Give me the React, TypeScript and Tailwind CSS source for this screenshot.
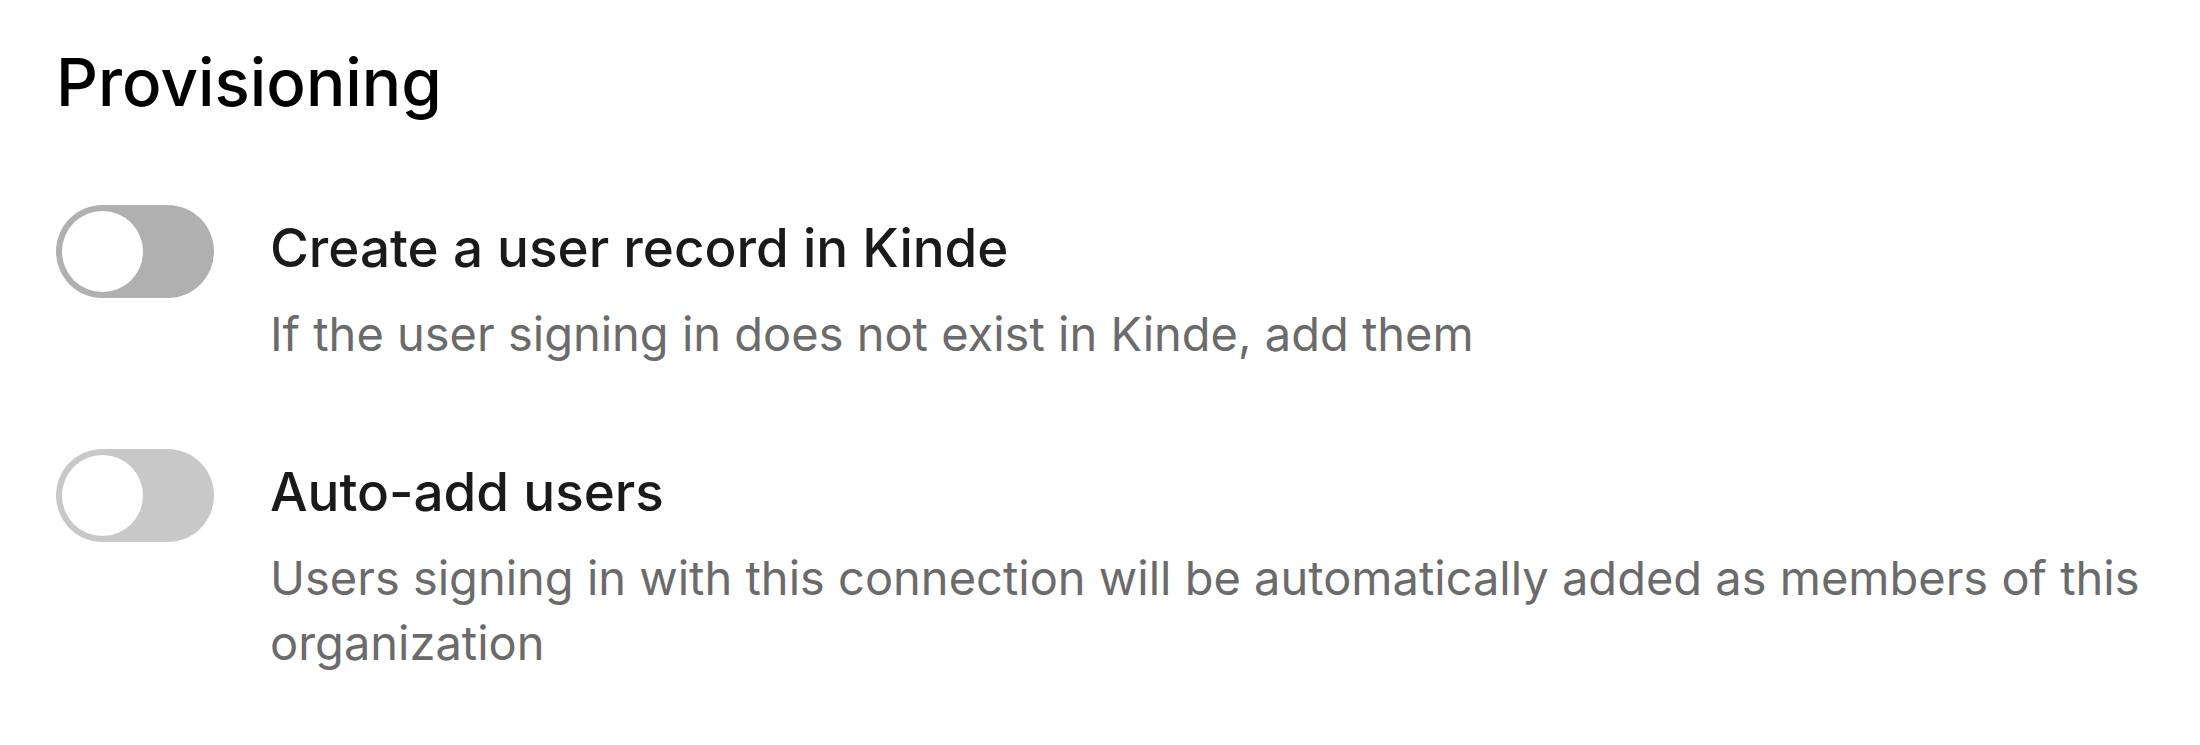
import React from "react";

function Toggle({ track }: { track: string }) {
  return (
    <div className={`flex h-[93px] w-[158px] shrink-0 items-center rounded-full p-[6px] ${track}`}>
      <div className="h-[81px] w-[81px] rounded-full bg-white" />
    </div>
  );
}

export default function App() {
  return (
    <div className="h-[745px] w-[2200px] bg-white pl-[56px] pr-[40px] font-['Inter',sans-serif]">
      <h2 className="pt-[43px] text-[65.5px] leading-[80px] font-medium text-black">Provisioning</h2>
      <div className="mt-[82px] flex items-start gap-[56px]">
        <Toggle track="bg-[#b0b0b0]" />
        <div className="flex flex-col">
          <div className="text-[53px] leading-[86px] font-medium text-[#1a1a1a]">Create a user record in Kinde</div>
          <div className="mt-[10px] text-[47px] leading-[65px] text-[#6b6b6b]">
            If the user signing in does not exist in Kinde, add them
          </div>
        </div>
      </div>
      <div className="mt-[83px] flex items-start gap-[56px]">
        <Toggle track="bg-[#c8c8c8]" />
        <div className="flex flex-col">
          <div className="text-[53px] leading-[86px] font-medium text-[#1a1a1a]">Auto-add users</div>
          <div className="mt-[10px] text-[47px] leading-[65px] text-[#6b6b6b]">
            Users signing in with this connection will be automatically added as members of this organization
          </div>
        </div>
      </div>
    </div>
  );
}
